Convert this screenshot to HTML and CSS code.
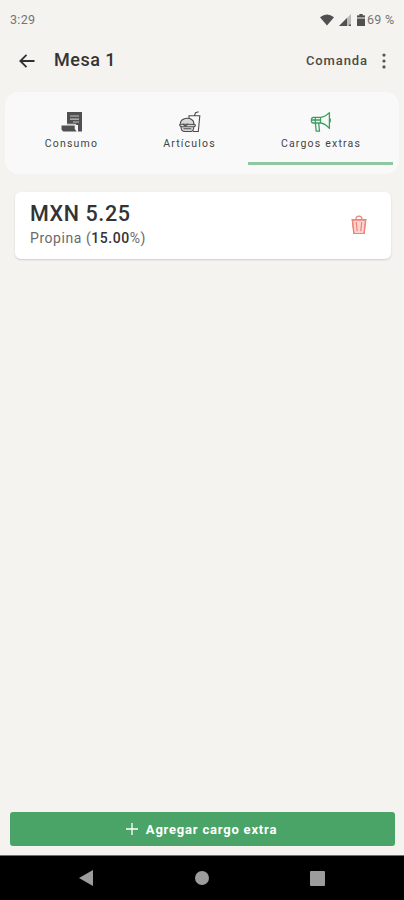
FILE: index.html
```html
<!DOCTYPE html>
<html lang="es">
<head>
    <meta charset="UTF-8">
    <meta name="viewport" content="width=device-width, initial-scale=1.0">
    <title>Mesa 1</title>
    <link rel="stylesheet" href="styles.css">
</head>
<body>
    <div class="status-bar">
        <span class="time">3:29</span>
        <div class="status-icons">
            <svg class="wifi" width="14" height="12" viewBox="0 0 14 12"><path d="M0 3.2Q7-2 14 3.2L7 11.6Z"/></svg>
            <svg class="signal" width="12" height="12" viewBox="0 0 12 12"><path d="M0 12L12 0V12Z" opacity=".35"/><path d="M0 12L8 4V12Z"/><path d="M10 10.5h2V12h-2z"/></svg>
            <svg class="battery" width="8" height="12" viewBox="0 0 8 12"><path d="M2.5 0h3v1.5H8V12H0V1.5h2.5z" opacity=".5"/><path d="M2.5 0h3v1.5H8V3H0V1.5h2.5zM0 5h8v7H0z"/></svg>
            <span class="battery-text">69 %</span>
        </div>
    </div>

    <header class="app-bar">
        <svg class="back" width="16" height="14" viewBox="0 0 16 14"><path d="M15.5 7H1.5M7.5 .8L1.3 7l6.2 6.2"/></svg>
        <h1>Mesa 1</h1>
        <span class="comanda">Comanda</span>
        <svg class="more" width="4" height="16" viewBox="0 0 4 16"><circle cx="2" cy="2.1" r="1.6"/><circle cx="2" cy="8" r="1.6"/><circle cx="2" cy="13.9" r="1.6"/></svg>
    </header>

    <nav class="tabs">
        <div class="tab">
            <svg width="22" height="22" viewBox="0 0 22 22">
                <path d="M6 1h15v19.5h-4V14H6z" fill="#505050"/>
                <path d="M9 5h9M9 8.2h9M12 11h6" stroke="#c4c4c4" stroke-width="1.2"/>
                <path d="M.5 14.5h13.2V18l2 2.5H2.2L.5 18.5z" fill="#505050"/>
                <path d="M4.5 13.3h10.2v5l1.7 2.4" fill="none" stroke="#eee" stroke-width="1"/>
            </svg>
            <span>Consumo</span>
        </div>
        <div class="tab">
            <svg width="22" height="22" viewBox="0 0 22 22" fill="none" stroke="#4c4c4c" stroke-width="1.1">
                <path d="M10 8V4.7h10.8L19.3 20.5H14M15.5 4.5l1-2.8 3.2-1"/>
                <path d="M1.3 13C1 5.5 14.8 5.5 14.8 12.2v1.3zM1.2 13.2c-1.2 1 .2 2.5 1.8 2.5h11.6c2 0 2.4-2.2.4-2.7M2 16c0 3.5 1.2 4.5 4 4.5h5.5c2.5 0 3.2-1.6 3.2-4.3" fill="#d8d8d8"/>
                <path d="M4 13l2.3 2L9 13M4.5 17.8h7.8"/>
            </svg>
            <span>Artículos</span>
        </div>
        <div class="tab active">
            <svg width="22" height="22" viewBox="0 0 22 22" fill="none" stroke="#3b9e60" stroke-width="1.3" stroke-linejoin="round">
                <path d="M10.5 6.3H3.2C.8 6.3.8 12 3.2 12h7.3zM10.5 6.3C14 6 17 4 19.4 1.6v15.8C17 14.6 14 12.4 10.5 12M5.3 6.5V12M1.5 9h9"/>
                <path d="M5.4 12l.8 8.2h3.3L8.7 12M20.2 7.5v3.7"/>
            </svg>
            <span>Cargos extras</span>
        </div>
    </nav>

    <main>
        <div class="card">
            <div class="charge">
                <div class="amount">MXN 5.25</div>
                <div class="detail">Propina (<b>15.00</b>%)</div>
            </div>
            <svg class="trash" width="16" height="20" viewBox="0 0 16 20">
                <path d="M1.3 5.2h13.4l-1.5 13.3H2.8z" fill="#fbd5d0"/>
                <path d="M.5 4.5h15M5 4.2C5 0 11 0 11 4.2M1.4 4.8l1.6 13.7h10l1.6-13.7M5.3 7l.9 9.3M10.7 7l-.9 9.3"/>
            </svg>
        </div>
    </main>

    <button class="add-button">
        <svg width="12" height="12" viewBox="0 0 12 12"><path d="M6 0v12M0 6h12"/></svg>
        <span>Agregar cargo extra</span>
    </button>

    <footer class="nav-bar">
        <svg width="14" height="16" viewBox="0 0 14 16"><path d="M0 8L14 0V16Z"/></svg>
        <svg width="14" height="14" viewBox="0 0 14 14"><circle cx="7" cy="7" r="7"/></svg>
        <svg width="15" height="15" viewBox="0 0 15 15"><rect width="15" height="15" rx="1"/></svg>
    </footer>
</body>
</html>
```
FILE: styles.css
```css
* {
    box-sizing: border-box;
}
body {
    margin: 0;
    height: 900px;
    display: flex;
    flex-direction: column;
    background-color: #f4f3ef;
    font-family: Roboto, "Liberation Sans", sans-serif;
    color: #333335;
}
svg {
    display: block;
    flex: none;
}
.status-bar {
    height: 39px;
    padding: 0 9px 0 10px;
    display: flex;
    align-items: center;
    justify-content: space-between;
    font-size: 12.5px;
    letter-spacing: 0.3px;
    color: #747474;
}
.status-icons {
    display: flex;
    align-items: center;
    fill: #505050;
}
.wifi {
    margin-right: 5px;
}
.signal {
    margin-right: 6px;
}
.battery {
    margin-right: 2px;
}
.battery-text {
    width: 28px;
    white-space: nowrap;
}
.app-bar {
    height: 43px;
    padding: 0 18px 0 19px;
    display: flex;
    align-items: center;
}
.back {
    fill: none;
    stroke: #303030;
    stroke-width: 1.8;
}
h1 {
    margin: 0 auto 0 19px;
    padding-bottom: 1px;
    font-size: 18px;
    font-weight: 500;
    line-height: 22px;
    letter-spacing: 0.5px;
}
.comanda {
    font-size: 13px;
    font-weight: 500;
    letter-spacing: 0.9px;
    color: #4b4b4b;
}
.more {
    margin-left: 14px;
    fill: #555;
}
.tabs {
    height: 82px;
    margin: 10px 5px 0;
    padding: 0 6px 0 7px;
    display: grid;
    grid-template-columns: 118px 118px 145px;
    background-color: #f9f9f9;
    border-radius: 14px;
}
.tab {
    height: 73px;
    padding: 19px 0 0 1px;
    display: flex;
    flex-direction: column;
    align-items: center;
    border-bottom: 3px solid transparent;
    font-size: 10.5px;
    line-height: 14px;
    letter-spacing: 1.2px;
    color: #444;
}
.tab span {
    margin-top: 4px;
}
.tab.active {
    border-bottom-color: #8fc7a1;
}
main {
    flex: 1;
    padding: 18px 13px 0 15px;
}
.card {
    height: 67px;
    padding: 0 24px 2px 15px;
    display: flex;
    align-items: center;
    justify-content: space-between;
    background-color: #fff;
    border-radius: 6px;
    box-shadow: 0 1px 2px rgba(0, 0, 0, 0.16);
}
.amount {
    font-size: 21.5px;
    font-weight: 500;
    line-height: 27px;
    letter-spacing: 0.6px;
}
.detail {
    font-size: 14px;
    line-height: 22px;
    letter-spacing: 0.55px;
    color: #6a6a6a;
}
.detail b {
    font-weight: 500;
    color: #333;
}
.trash {
    fill: none;
    stroke: #ee8378;
    stroke-width: 1.2;
}
.add-button {
    height: 34px;
    margin: 0 9px 9px 10px;
    padding: 0 2px 0 0;
    display: flex;
    align-items: center;
    justify-content: center;
    gap: 8px;
    border: none;
    border-radius: 3px;
    background-color: #4ba467;
    color: #fff;
    font-family: inherit;
    font-size: 13px;
    font-weight: 700;
    letter-spacing: 0.8px;
}
.add-button svg {
    fill: none;
    stroke: #fff;
    stroke-width: 1.3;
}
.nav-bar {
    height: 45px;
    padding: 0 79px;
    display: flex;
    align-items: center;
    justify-content: space-between;
    background-color: #000;
    border-top: 1px solid #6e6e6e;
    fill: #9c9c9c;
}
```
